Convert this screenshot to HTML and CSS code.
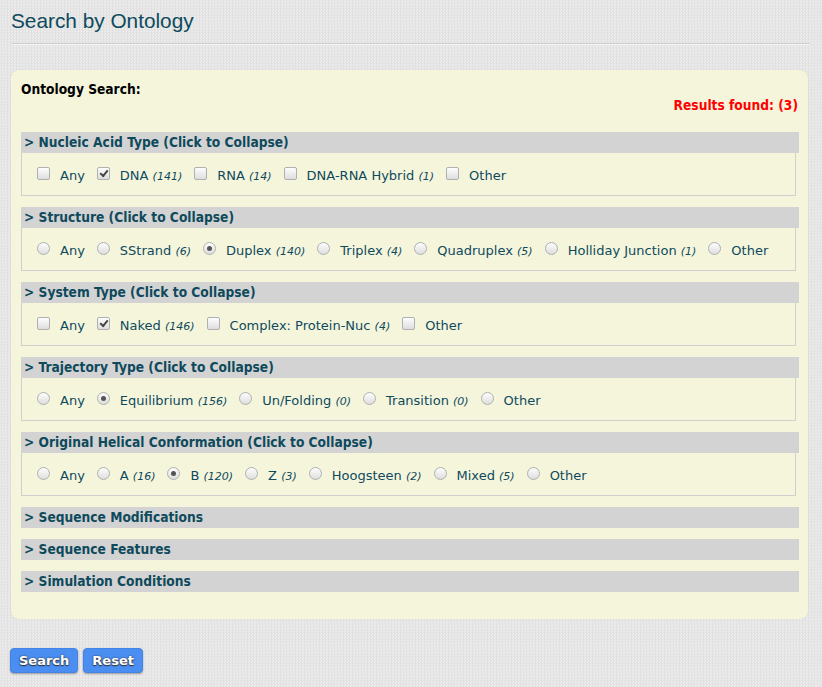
FILE: index.html
```html
<!DOCTYPE html>
<html>
<head>
<meta charset="utf-8">
<link rel="stylesheet" href="styles.css">
</head>
<body>
<div class="page">
  <h1 class="title">Search by Ontology</h1>
  <div class="rule"></div>
  <div class="panel">
    <div class="panel-head">Ontology Search:</div>
    <div class="results">Results found: (3)</div>

    <div class="section">
      <div class="bar">&gt; Nucleic Acid Type (Click to Collapse)</div>
      <div class="opts">
        <span class="opt"><span class="cb"></span><span class="lbl">Any</span></span>
        <span class="opt"><span class="cb on"></span><span class="lbl">DNA <i>(141)</i></span></span>
        <span class="opt"><span class="cb"></span><span class="lbl">RNA <i>(14)</i></span></span>
        <span class="opt"><span class="cb"></span><span class="lbl">DNA-RNA Hybrid <i>(1)</i></span></span>
        <span class="opt"><span class="cb"></span><span class="lbl">Other</span></span>
      </div>
    </div>

    <div class="section">
      <div class="bar">&gt; Structure (Click to Collapse)</div>
      <div class="opts">
        <span class="opt"><span class="rd"></span><span class="lbl">Any</span></span>
        <span class="opt"><span class="rd"></span><span class="lbl">SStrand <i>(6)</i></span></span>
        <span class="opt"><span class="rd on"></span><span class="lbl">Duplex <i>(140)</i></span></span>
        <span class="opt"><span class="rd"></span><span class="lbl">Triplex <i>(4)</i></span></span>
        <span class="opt"><span class="rd"></span><span class="lbl">Quadruplex <i>(5)</i></span></span>
        <span class="opt"><span class="rd"></span><span class="lbl">Holliday Junction <i>(1)</i></span></span>
        <span class="opt"><span class="rd"></span><span class="lbl">Other</span></span>
      </div>
    </div>

    <div class="section">
      <div class="bar">&gt; System Type (Click to Collapse)</div>
      <div class="opts">
        <span class="opt"><span class="cb"></span><span class="lbl">Any</span></span>
        <span class="opt"><span class="cb on"></span><span class="lbl">Naked <i>(146)</i></span></span>
        <span class="opt"><span class="cb"></span><span class="lbl">Complex: Protein-Nuc <i>(4)</i></span></span>
        <span class="opt"><span class="cb"></span><span class="lbl">Other</span></span>
      </div>
    </div>

    <div class="section">
      <div class="bar">&gt; Trajectory Type (Click to Collapse)</div>
      <div class="opts">
        <span class="opt"><span class="rd"></span><span class="lbl">Any</span></span>
        <span class="opt"><span class="rd on"></span><span class="lbl">Equilibrium <i>(156)</i></span></span>
        <span class="opt"><span class="rd"></span><span class="lbl">Un/Folding <i>(0)</i></span></span>
        <span class="opt"><span class="rd"></span><span class="lbl">Transition <i>(0)</i></span></span>
        <span class="opt"><span class="rd"></span><span class="lbl">Other</span></span>
      </div>
    </div>

    <div class="section">
      <div class="bar">&gt; Original Helical Conformation (Click to Collapse)</div>
      <div class="opts">
        <span class="opt"><span class="rd"></span><span class="lbl">Any</span></span>
        <span class="opt"><span class="rd"></span><span class="lbl">A <i>(16)</i></span></span>
        <span class="opt"><span class="rd on"></span><span class="lbl">B <i>(120)</i></span></span>
        <span class="opt"><span class="rd"></span><span class="lbl">Z <i>(3)</i></span></span>
        <span class="opt"><span class="rd"></span><span class="lbl">Hoogsteen <i>(2)</i></span></span>
        <span class="opt"><span class="rd"></span><span class="lbl">Mixed <i>(5)</i></span></span>
        <span class="opt"><span class="rd"></span><span class="lbl">Other</span></span>
      </div>
    </div>

    <div class="section collapsed"><div class="bar">&gt; Sequence Modifications</div></div>
    <div class="section collapsed"><div class="bar">&gt; Sequence Features</div></div>
    <div class="section collapsed"><div class="bar">&gt; Simulation Conditions</div></div>
  </div>
  <div class="buttons">
    <button class="btn">Search</button>
    <button class="btn">Reset</button>
  </div>
</div>
</body>
</html>
```

FILE: styles.css
```css
html, body {
  margin: 0;
  padding: 0;
}
body {
  background-color: #e6e6e6;
  background-image: repeating-conic-gradient(#e1e1e1 0 25%, #ececec 0 50%);
  background-size: 3px 3px;
  font-family: "DejaVu Sans", Verdana, sans-serif;
  color: #0e4a5c;
  width: 822px;
  height: 687px;
  overflow: hidden;
}
.page {
  padding: 0 12px 0 11px;
}
.title {
  margin: 0;
  padding-top: 9px;
  font-family: "Liberation Sans", Arial, sans-serif;
  font-weight: normal;
  font-size: 20.8px;
  line-height: 24px;
  color: #0e4a5c;
}
.rule {
  margin-top: 10px;
  height: 1px;
  background: #cfcfcf;
  border-bottom: 1px solid #f4f4f4;
}
.panel {
  margin-top: 25px;
  margin-right: 2px;
  background: #f5f5dc;
  border-radius: 8px;
  padding: 11px 9px 27px 10px;
  box-shadow: 0 0 1px rgba(0,0,0,0.15);
}
.panel-head, .results, .bar {
  font-family: "DejaVu Sans Condensed", "DejaVu Sans", sans-serif;
  font-stretch: condensed;
  font-weight: bold;
  font-size: 13.65px;
}
.panel-head {
  line-height: 16px;
  color: #000;
}
.results {
  text-align: right;
  line-height: 16px;
  color: #ff0000;
  margin-right: 1px;
  margin-bottom: 19px;
}
.section {
  margin-bottom: 11px;
}
.section.collapsed:last-child {
  margin-bottom: 0;
}
.bar {
  background: #d3d3d3;
  height: 21px;
  line-height: 21px;
  padding-left: 3px;
  color: #0e4a5c;
}
.opts {
  margin-right: 3px;
  border: 1px solid #cfcfcf;
  border-top: none;
  height: 42px;
  display: flex;
  align-items: center;
  padding-left: 15px;
  gap: 12px;
  font-size: 13px;
}
.opt {
  display: flex;
  align-items: center;
  gap: 10px;
}
.lbl {
  line-height: 16px;
  padding-top: 4px;
}
.lbl i {
  font-size: 11px;
}
.cb, .rd {
  width: 11px;
  height: 11px;
  border: 1px solid #b0b0b0;
  background: linear-gradient(#fdfdfd, #dedede);
  position: relative;
  flex: none;
  margin-top: -1px;
}
.cb {
  border-radius: 2px;
}
.rd {
  border-radius: 50%;
}
.cb.on::after {
  content: "";
  position: absolute;
  left: 2px;
  top: 2px;
  width: 6px;
  height: 3px;
  border-left: 2px solid #444;
  border-bottom: 2px solid #444;
  transform: rotate(-50deg);
}
.rd.on::after {
  content: "";
  position: absolute;
  left: 3px;
  top: 3px;
  width: 5px;
  height: 5px;
  border-radius: 50%;
  background: #555;
}
.buttons {
  margin-top: 29px;
  margin-left: -1px;
  display: flex;
  gap: 5px;
}
.btn {
  font-family: "DejaVu Sans", Verdana, sans-serif;
  font-weight: bold;
  font-size: 13px;
  color: #fff;
  text-shadow: 0 0 2px #333, 0 1px 1px #333;
  background: #4a8ef2;
  border: 1px solid #4384e8;
  border-radius: 4px;
  height: 25px;
  padding: 0 8px;
  box-shadow: 0 1px 2px rgba(0,0,0,0.35);
  cursor: pointer;
}
```
